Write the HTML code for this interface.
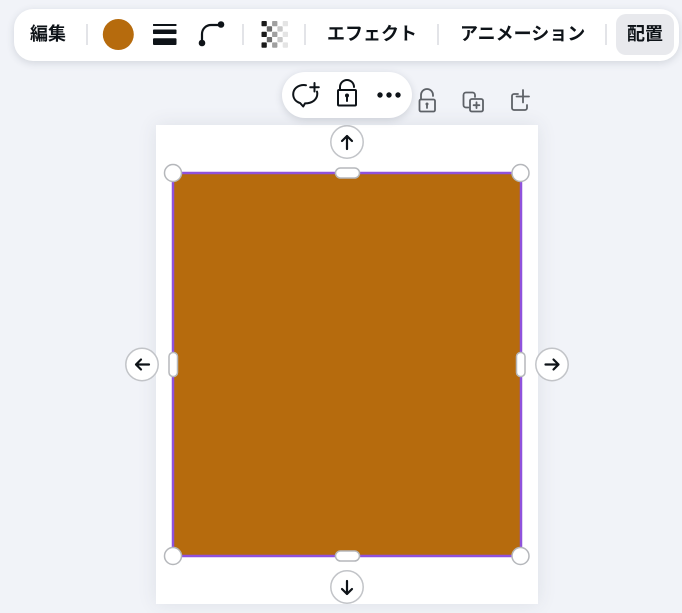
<!DOCTYPE html>
<html lang="ja">
<head>
<meta charset="utf-8">
<title>配置</title>
<style>
html,body{margin:0;padding:0;width:682px;height:613px;overflow:hidden;background:#f1f3f8;}
body{position:relative;font-family:"Liberation Sans","Noto Sans CJK JP",sans-serif;color:#0e1318;}
.page{position:absolute;left:156px;top:125px;width:382px;height:479px;background:#fff;box-shadow:0 0 18px rgba(60,70,90,.10);}
.bar{position:absolute;left:14px;top:9px;width:665px;height:52px;background:#fff;border-radius:19px;box-shadow:0 2px 8px rgba(50,60,80,.16);}
.active{position:absolute;left:616px;top:14px;width:58px;height:41px;background:#e8e9ed;border-radius:10px;}
.t{position:absolute;top:21px;height:26px;line-height:26px;font-size:18px;font-weight:700;white-space:nowrap;}
.sep{position:absolute;top:24px;width:2px;height:21px;background:#e3e4e8;}
.pop{position:absolute;left:282px;top:72px;width:130px;height:46px;background:#fff;border-radius:23px;box-shadow:0 2px 8px rgba(50,60,80,.18);}
svg{position:absolute;left:0;top:0;}
</style>
</head>
<body>
<div class="page"></div>
<svg width="682" height="613" viewBox="0 0 682 613" fill="none">
  <!-- ghost page actions -->
  <g stroke="#5d6167" stroke-width="1.800" stroke-linecap="round" stroke-linejoin="round">
    <rect x="419.500" y="99.500" width="15.500" height="12" rx="1.500"/>
    <path d="M421 99v-4a6 6 0 0 1 12 0v1"/>
    <path d="M427 104v4"/>
    <path d="M468.500 107.500h-2.500a2.500 2.500 0 0 1-2.500-2.500v-10a2.500 2.500 0 0 1 2.500-2.500h6.500a2.500 2.500 0 0 1 2.500 2.500v2"/>
    <rect x="470" y="99" width="13" height="12.500" rx="1.800"/>
    <path d="M476.500 102.300v5.800M473.600 105.200h5.800"/>
    <path d="M518 94h-4a2 2 0 0 0-2 2v12a2 2 0 0 0 2 2h11a2 2 0 0 0 2-2v-3"/>
    <path d="M523 90v12.500M516.500 96.500h12.500"/>
  </g>
  <circle cx="427" cy="104" r="1.500" fill="#5d6167"/>
  <!-- shape -->
  <rect x="173" y="173" width="348" height="383" fill="#b66b0d" stroke="#8f52dc" stroke-width="2.500"/>
  <!-- corner handles -->
  <g fill="#fff" stroke="#b5b7bb" stroke-width="1.500">
    <circle cx="173" cy="173" r="8.500"/>
    <circle cx="520.500" cy="173" r="8.500"/>
    <circle cx="173" cy="556" r="8.500"/>
    <circle cx="520.500" cy="556" r="8.500"/>
    <rect x="335.500" y="168" width="24" height="10" rx="5"/>
    <rect x="335.500" y="551" width="24" height="10" rx="5"/>
    <rect x="169" y="352.500" width="8.500" height="24" rx="4"/>
    <rect x="516.500" y="352.500" width="8.500" height="24" rx="4"/>
  </g>
  <!-- arrow buttons -->
  <g fill="#fff" stroke="#c2c4c8" stroke-width="1.500">
    <circle cx="347" cy="142" r="16.200"/>
    <circle cx="142" cy="364.500" r="16.200"/>
    <circle cx="552" cy="364.500" r="16.200"/>
    <circle cx="347" cy="587" r="16.200"/>
  </g>
  <g stroke="#0e1318" stroke-width="2.200" stroke-linecap="round" stroke-linejoin="round">
    <path d="M347 149v-13M342 141l5-5 5 5"/>
    <path d="M347 581v13M342 589l5 5 5-5"/>
    <path d="M149 364.500h-13M141 359.500l-5 5 5 5"/>
    <path d="M545.500 364.500h13M553.500 359.500l5 5-5 5"/>
  </g>
</svg>
<div class="bar"></div>
<div class="active"></div>
<div class="t" style="left:30px;">編集</div>
<div class="sep" style="left:86px;"></div>
<div class="sep" style="left:242px;"></div>
<div class="sep" style="left:304px;"></div>
<div class="t" style="left:327px;">エフェクト</div>
<div class="sep" style="left:437px;"></div>
<div class="t" style="left:460px;">アニメーション</div>
<div class="sep" style="left:605px;"></div>
<div class="t" style="left:627px;">配置</div>
<div class="pop"></div>
<svg width="682" height="613" viewBox="0 0 682 613" fill="none">
  <circle cx="118.300" cy="34.500" r="15.500" fill="#b66b0d"/>
  <g fill="#0e1318">
    <rect x="153" y="24" width="23.500" height="2" rx=".5"/>
    <rect x="153" y="29.500" width="23.500" height="4.500" rx=".8"/>
    <rect x="153" y="38.300" width="23.500" height="6.700" rx="1"/>
    <circle cx="202" cy="43" r="3.300"/>
    <circle cx="221" cy="24.500" r="3.300"/>
  </g>
  <path d="M202 43v-9a9 9 0 0 1 9-9h10" stroke="#0e1318" stroke-width="2.200"/>
  <!-- transparency -->
  <g fill="#1a1a1a">
    <rect x="261.500" y="21" width="5.300" height="5.300" rx=".8"/>
    <rect x="261.500" y="31.700" width="5.300" height="5.300" rx=".8"/>
    <rect x="261.500" y="42.400" width="5.300" height="5.300" rx=".8"/>
  </g>
  <g fill="#6b6b6b">
    <rect x="266.800" y="26.300" width="5.300" height="5.300" rx=".8"/>
    <rect x="266.800" y="37" width="5.300" height="5.300" rx=".8"/>
  </g>
  <g fill="#a0a0a0">
    <rect x="272.100" y="21" width="5.300" height="5.300" rx=".8"/>
    <rect x="272.100" y="31.700" width="5.300" height="5.300" rx=".8"/>
    <rect x="272.100" y="42.400" width="5.300" height="5.300" rx=".8"/>
  </g>
  <g fill="#c8c8c8">
    <rect x="277.400" y="26.300" width="5.300" height="5.300" rx=".8"/>
    <rect x="277.400" y="37" width="5.300" height="5.300" rx=".8"/>
  </g>
  <g fill="#e4e4e4">
    <rect x="282.700" y="21" width="5.300" height="5.300" rx=".8"/>
    <rect x="282.700" y="31.700" width="5.300" height="5.300" rx=".8"/>
    <rect x="282.700" y="42.400" width="5.300" height="5.300" rx=".8"/>
  </g>
  <!-- popup icons -->
  <g stroke="#0e1318" stroke-width="2" stroke-linecap="round" stroke-linejoin="round">
    <path d="M306 85.200c-.7-.1-1.400-.2-2-.2-6.300 0-10.800 4-10.800 9.300 0 4.300 2.800 7.500 7 8.800l3 3.400 1.800-3.100c7-.1 12.300-3.700 12.300-9.600 0-.8-.1-1.500-.3-2.200"/>
    <path d="M314.500 83v8.500M310.200 87.300h8.600"/>
    <rect x="338" y="90" width="18" height="15.500" rx="1"/>
    <path d="M340 90v-3a7 7 0 0 1 14 0"/>
    <path d="M347 96v5"/>
  </g>
  <circle cx="347" cy="95.500" r="2" fill="#0e1318"/>
  <g fill="#0e1318">
    <circle cx="380" cy="95" r="2.700"/>
    <circle cx="389" cy="95" r="2.700"/>
    <circle cx="398" cy="95" r="2.700"/>
  </g>
</svg>
</body>
</html>
